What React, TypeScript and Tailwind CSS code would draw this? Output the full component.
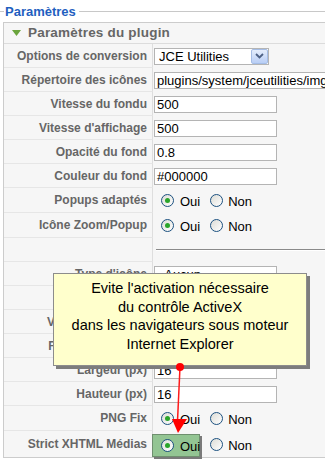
import React from 'react';

type Row =
  | { label: string; kind: 'input'; value: string; wide?: boolean; h?: number }
  | { label: string; kind: 'select'; value: string; h?: number }
  | { label: string; kind: 'radio'; h?: number }
  | { label: string; kind: 'hr'; h?: number };

const rows: Row[] = [
  { label: 'Options de conversion', kind: 'select', value: 'JCE Utilities' },
  { label: 'Répertoire des icônes', kind: 'input', value: 'plugins/system/jceutilities/img/', wide: true },
  { label: 'Vitesse du fondu', kind: 'input', value: '500' },
  { label: "Vitesse d'affichage", kind: 'input', value: '500' },
  { label: 'Opacité du fond', kind: 'input', value: '0.8' },
  { label: 'Couleur du fond', kind: 'input', value: '#000000' },
  { label: 'Popups adaptés', kind: 'radio', h: 25 },
  { label: 'Icône Zoom/Popup', kind: 'radio', h: 25 },
  { label: '', kind: 'hr' },
  { label: "Type d'icône", kind: 'input', value: '- Aucun -' },
  { label: 'Position', kind: 'input', value: '' },
  { label: "Vitesse de l'icône", kind: 'input', value: '' },
  { label: "Format de l'icône", kind: 'input', value: '' },
  { label: 'Largeur (px)', kind: 'input', value: '16' },
  { label: 'Hauteur (px)', kind: 'input', value: '16' },
  { label: 'PNG Fix', kind: 'radio', h: 25 },
  { label: 'Strict XHTML Médias', kind: 'radio', h: 26 },
];

function Radio({ checked }: { checked?: boolean }) {
  return (
    <span className="w-[13px] h-[13px] rounded-full border border-[#1c5180] bg-gradient-to-br from-[#dcdcd6] to-white flex items-center justify-center shrink-0">
      {checked && <span className="w-[5px] h-[5px] rounded-full bg-[#2aa52a]" />}
    </span>
  );
}

function Value({ row }: { row: Row }) {
  if (row.kind === 'select') {
    return (
      <div className="ml-[1px] w-[115px] h-[17px] border border-[#b4b4b4] bg-white flex items-center justify-between">
        <span className="pl-[4px] text-[13px] text-black leading-none">{row.value}</span>
        <span className="w-[17px] h-[15px] rounded-[2px] border border-[#a5bde6] bg-gradient-to-b from-[#e4edfc] to-[#b9cef5] flex items-center justify-center">
          <svg width="9" height="6" viewBox="0 0 9 6">
            <path d="M1 1 L4.5 4.5 L8 1" stroke="#4d6185" strokeWidth="1.8" fill="none" />
          </svg>
        </span>
      </div>
    );
  }
  if (row.kind === 'input') {
    return (
      <div className={`ml-[1px] h-[17px] border border-[#b4b4b4] bg-white flex items-center ${row.wide ? 'w-[200px]' : 'w-[123px]'}`}>
        <span className="pl-[2px] text-[13px] text-black leading-none whitespace-nowrap">{row.value}</span>
      </div>
    );
  }
  if (row.kind === 'radio') {
    return (
      <div className="flex items-center pl-[8px] text-[13px] text-black">
        <Radio checked />
        <span className="ml-[6px] mt-[3px]">Oui</span>
        <span className="ml-[10px]"><Radio /></span>
        <span className="ml-[5px] mt-[3px]">Non</span>
      </div>
    );
  }
  return (
    <div className="ml-[3px] w-full">
      <div className="h-px bg-[#8a8a8a]" />
      <div className="h-px bg-white" />
    </div>
  );
}

export default function App() {
  return (
    <div className="relative w-[325px] h-[467px] overflow-hidden bg-white font-['Liberation_Sans',Arial,sans-serif]">
      {/* fieldset legend */}
      <div className="h-[22px] flex items-center">
        <span className="w-[4px] h-px bg-[#c8c8c8]" />
        <span className="px-[1px] text-[13px] font-bold text-[#1f5fbf] leading-none">Paramètres</span>
        <span className="ml-[2px] flex-1 h-px bg-[#c8c8c8]" />
      </div>

      {/* plugin panel */}
      <div className="ml-[3px] w-[340px] border-t border-l border-b border-[#cccccc] bg-[#f6f6f6]">
        <div className="h-[21px] border-b border-[#dcdcdc] flex items-center">
          <svg className="ml-[8px]" width="9" height="6" viewBox="0 0 9 6">
            <path d="M0 0 L9 0 L4.5 6 Z" fill="#6aa43c" />
          </svg>
          <span className="ml-[7px] text-[13.5px] font-bold text-[#666666] tracking-[0.2px]">Paramètres du plugin</span>
        </div>

        {rows.map((row, i) => (
          <div key={i} className="grid grid-cols-[149px_1fr]" style={{ height: row.h ?? 24 }}>
            <div className={`flex items-center justify-end pr-[5px] border-r border-[#dedede] ${i < rows.length - 1 ? 'border-b border-b-[#e6e6e6]' : ''}`}>
              <span className="text-[12px] font-bold text-[#666666] whitespace-nowrap">{row.label}</span>
            </div>
            <div className="flex items-center">
              <Value row={row} />
            </div>
          </div>
        ))}
      </div>

      {/* tooltip */}
      <div className="absolute left-[53px] top-[273px] w-[254px] h-[93px] border border-[#8c8c8c] bg-[#ffffcc] shadow-[3px_3px_0_#7d7d7d] pt-[5px] text-center text-[14.5px] leading-[18.6px] text-black">
        <div>Evite l'activation nécessaire</div>
        <div>du contrôle ActiveX</div>
        <div>dans les navigateurs sous moteur</div>
        <div>Internet Explorer</div>
      </div>

      {/* highlight */}
      <div className="absolute left-[152px] top-[434px] w-[48px] h-[23px] border border-[#6f8f6f] bg-[#93c593] shadow-[2px_2px_0_#7a7a7a] flex items-center pl-[8px] text-[13px] text-black">
        <Radio checked />
        <span className="ml-[6px] mt-[3px]">Oui</span>
      </div>

      {/* arrow */}
      <svg className="absolute left-0 top-0 pointer-events-none" width="325" height="467">
        <line x1="180" y1="367" x2="177.5" y2="421" stroke="#ff1a1a" strokeWidth="1.5" />
        <path d="M172 419 L187 419 L178 433 Z" fill="#ff0000" />
        <circle cx="180" cy="367" r="4" fill="#ff0000" />
      </svg>
    </div>
  );
}
